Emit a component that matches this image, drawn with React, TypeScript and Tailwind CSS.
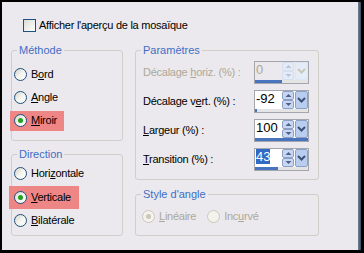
import clsx from "clsx"

const font = { fontFamily: '"Liberation Sans", Arial, sans-serif' }

function Radio({ checked, disabled }: { checked?: boolean; disabled?: boolean }) {
  return (
    <span
      className={clsx(
        "flex h-[13px] w-[13px] shrink-0 items-center justify-center rounded-full border",
        disabled
          ? "border-[#cac8bb] bg-[#f3f2ec]"
          : "border-[#1c5180] bg-gradient-to-br from-[#d4d4cc] via-[#f4f4f0] to-white"
      )}
    >
      {checked && (
        <span className={clsx("h-[5px] w-[5px] rounded-full", disabled ? "bg-[#cac8bb]" : "bg-[#21a121]")} />
      )}
    </span>
  )
}

function Option({ label, u, checked, disabled }: { label: string; u: number; checked?: boolean; disabled?: boolean }) {
  return (
    <span className={clsx("flex items-center gap-[4px]", disabled && "text-[#aca899]")}>
      <Radio checked={checked} disabled={disabled} />
      <span>
        {label.slice(0, u)}
        <u>{label[u]}</u>
        {label.slice(u + 1)}
      </span>
    </span>
  )
}

function Arrow({ up, disabled }: { up?: boolean; disabled?: boolean }) {
  return (
    <span
      className={clsx(
        "flex h-[9px] w-[12px] items-center justify-center rounded-[2px] border",
        disabled ? "border-[#d4dff0] bg-[#e3ebf7]" : "border-[#8ca0c4] bg-[#c8d6f4]"
      )}
    >
      <svg width="7" height="5" viewBox="0 0 7 5">
        <path d={up ? "M0.5 4 L3.5 1 L6.5 4 Z" : "M0.5 1 L3.5 4 L6.5 1 Z"} fill={disabled ? "#b8c4d6" : "#4d6185"} />
      </svg>
    </span>
  )
}

function Spin({ value, pct, disabled, selected }: { value: string; pct: number; disabled?: boolean; selected?: boolean }) {
  return (
    <div className={clsx("flex h-[23px] w-[55px] flex-col border border-[#a3a7ad]", disabled ? "bg-[#ebe9ed]" : "bg-white")}>
      <div className="flex flex-1">
        <div className={clsx("flex-1 pl-[1px] pt-[1px] text-[13px] leading-[14px] tracking-normal", disabled && "text-[#aca899]")}>
          <span className={clsx(selected && "bg-[#316ac5] text-white")}>{value}</span>
        </div>
        <div className="flex w-[12px] flex-col justify-center">
          <Arrow up disabled={disabled} />
          <Arrow disabled={disabled} />
        </div>
        <div
          className={clsx(
            "ml-[1px] flex w-[13px] items-center justify-center rounded-[2px] border",
            disabled ? "border-[#dde6f4] bg-[#e4ecf8]" : "border-[#8ca0c4] bg-[#b9cdf1]"
          )}
        >
          <svg width="9" height="6" viewBox="0 0 9 6">
            <path d="M1 1 L4.5 4.5 L8 1" fill="none" stroke={disabled ? "#c9c8b8" : "#3d5078"} strokeWidth="2" />
          </svg>
        </div>
      </div>
      <div className="h-[3px] bg-[#e4e4e4]">
        <div className="h-full bg-[#4a73be]" style={{ width: `${pct}%` }} />
      </div>
    </div>
  )
}

function Field({ label, u, value, pct, disabled, selected }: { label: string; u: number; value: string; pct: number; disabled?: boolean; selected?: boolean }) {
  return (
    <div className="flex h-[23px] items-center justify-between">
      <span className={clsx(disabled && "text-[#aca899]")}>
        {label.slice(0, u)}
        <u>{label[u]}</u>
        {label.slice(u + 1)}
      </span>
      <Spin value={value} pct={pct} disabled={disabled} selected={selected} />
    </div>
  )
}

function Group({ title, className, children }: { title: string; className?: string; children: React.ReactNode }) {
  return (
    <fieldset className={clsx("rounded-[3px] border border-[#d0cfc7]", className)}>
      <legend className="ml-[5px] px-[2px] leading-[13px] tracking-normal text-[#3f6ec6]">{title}</legend>
      {children}
    </fieldset>
  )
}

export default function App() {
  return (
    <div className="flex h-[253px] w-[364px] bg-black pl-[2px] pt-[2px] text-[11px] tracking-[-0.25px] text-black" style={font}>
      <div className="h-[248px] w-[356px] bg-[#ebe9ed] pl-[9px]">
        <div className="ml-[12px] mt-[17px] flex h-[13px] items-center gap-[3px]">
          <span className="h-[13px] w-[13px] border border-[#1c5180] bg-gradient-to-br from-[#dcdcd5] to-white" />
          <span>Afficher l'aperçu de la mosaïque</span>
        </div>
        <div className="mt-[12px] flex gap-[12px]">
          <div className="flex w-[112px] flex-col gap-[7px]">
            <Group title="Méthode" className="h-[97px]">
              <div className="flex flex-col pt-[6px]">
                <div className="flex h-[23px] items-center pl-[2px]">
                  <Option label="Bord" u={1} />
                </div>
                <div className="flex h-[23px] items-center pl-[2px]">
                  <Option label="Angle" u={0} />
                </div>
                <div className="flex h-[23px] items-center">
                  <div className="-ml-[2px] flex h-[20px] w-[54px] items-center bg-[#ee8686] pl-[4px]">
                    <Option label="Miroir" u={0} checked />
                  </div>
                </div>
              </div>
            </Group>
            <Group title="Direction" className="h-[88px]">
              <div className="flex flex-col pt-[1px]">
                <div className="flex h-[23px] items-center pl-[2px]">
                  <Option label="Horizontale" u={4} />
                </div>
                <div className="flex h-[24px] items-center">
                  <div className="-ml-[3px] flex h-[23px] w-[70px] items-center bg-[#ee8686] pl-[5px]">
                    <Option label="Verticale" u={0} checked />
                  </div>
                </div>
                <div className="flex h-[23px] items-center pl-[2px]">
                  <Option label="Bilatérale" u={0} />
                </div>
              </div>
            </Group>
          </div>
          <div className="flex w-[184px] flex-col gap-[8px]">
            <Group title="Paramètres" className="h-[136px]">
              <div className="flex flex-col gap-[6px] pl-[7px] pr-[9px] pt-[4px]">
                <Field label="Décalage horiz. (%) :" u={9} value="0" pct={50} disabled />
                <Field label="Décalage vert. (%) :" u={10} value="-92" pct={4} />
                <Field label="Largeur (%) :" u={0} value="100" pct={100} />
                <Field label="Transition (%) :" u={0} value="43" pct={43} selected />
              </div>
            </Group>
            <Group title="Style d'angle" className="h-[48px]">
              <div className="flex gap-[11px] pl-[6px] pt-[7px]">
                <Option label="Linéaire" u={0} checked disabled />
                <Option label="Incurvé" u={3} disabled />
              </div>
            </Group>
          </div>
        </div>
      </div>
      <div className="h-[248px] w-[3px] bg-gradient-to-r from-[#6f8296] to-[#3c4a58]" />
    </div>
  )
}
